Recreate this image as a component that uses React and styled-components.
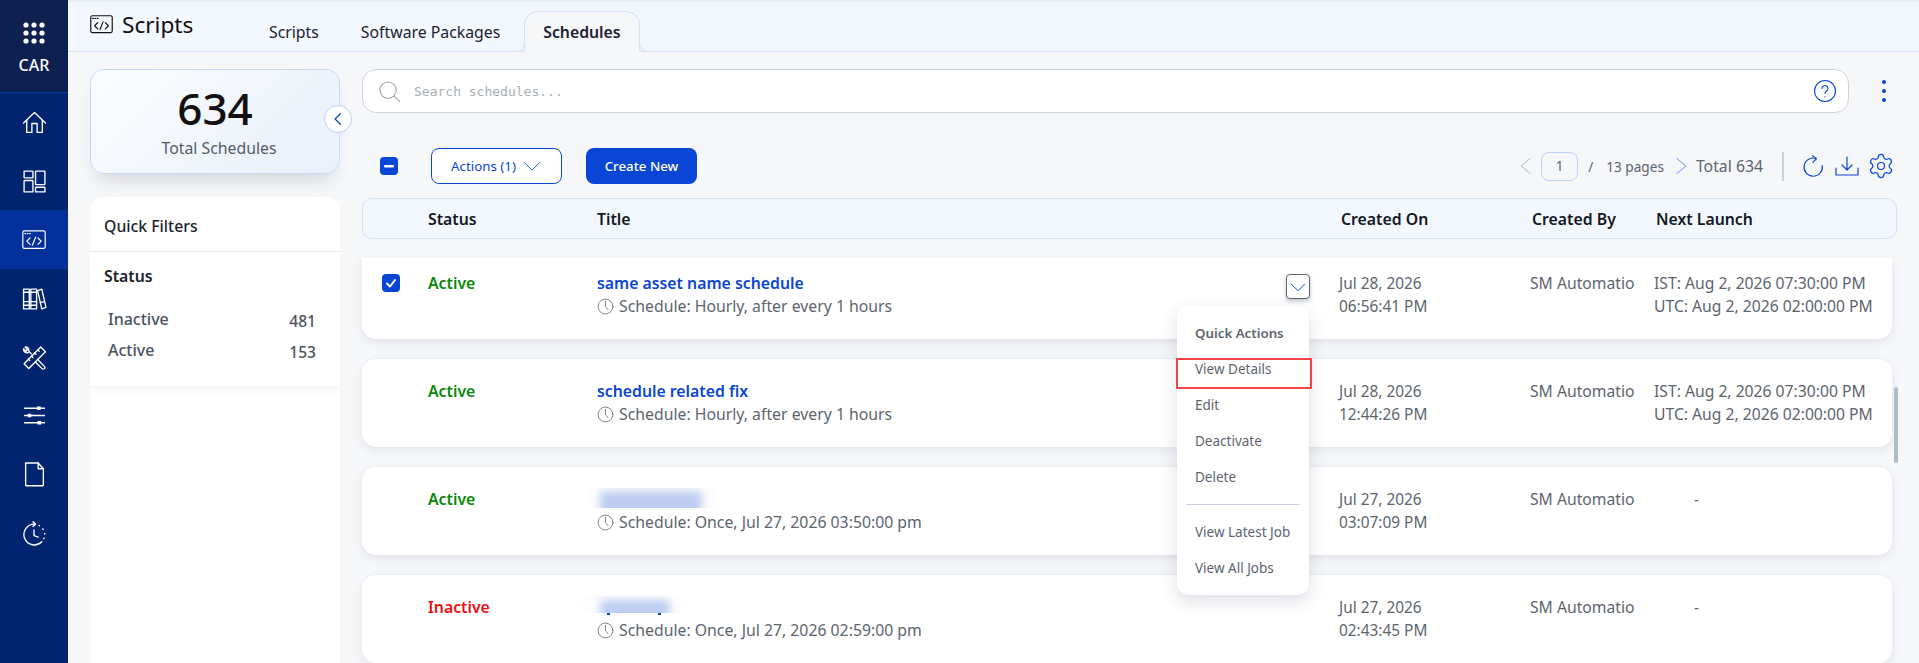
import React from "react";
import styled, { createGlobalStyle } from "styled-components";
import { Settings } from "lucide-react";

const Global = createGlobalStyle`
  html, body { margin: 0; padding: 0; height: 100%; overflow: hidden; background: #f6f7f9; }
  * { box-sizing: border-box; }
  body { font-family: "Noto Sans", "Open Sans", sans-serif; color: #111; }
`;

const Page = styled.div`display: flex; width: 1919px; height: 663px; overflow: hidden; position: relative;`;

const Sidebar = styled.nav`width: 68px; flex: none; background: #00246f; display: flex; flex-direction: column;`;
const Brand = styled.div`
  height: 93px; background: #0e2050; border-bottom: 1px solid #0a3ca8; color: #fff;
  display: flex; flex-direction: column; align-items: center; padding-top: 22px; gap: 11px;
  font-size: 16px; font-weight: 500; line-height: 20px;
`;
const NavItem = styled.div`
  height: 58.7px; display: flex; align-items: center; justify-content: center; color: #fff;
  background: ${p => (p.$active ? "#03309a" : "transparent")};
`;

const Main = styled.div`flex: 1; min-width: 0; display: flex; flex-direction: column;`;
const Header = styled.header`
  height: 52px; flex: none; background: #f3f7fe; border-bottom: 1px solid #d4e1f7;
  box-shadow: inset 0 3px 3px -2px rgba(30, 40, 60, 0.08);
  display: flex; padding-left: 22px; position: relative;
`;
const PageTitle = styled.div`
  display: flex; align-items: center; gap: 9px; height: 51px; width: 179px;
  font-size: 22.6px; line-height: 28px; color: #111; margin-top: -1px; align-self: flex-start;
`;
const Tabs = styled.div`display: flex; align-items: flex-end; height: 52px; margin-left: -21px;`;
const Tab = styled.div`
  height: 41px; padding: 0 21px; display: flex; align-items: center;
  font-size: 15.8px; color: #1b2130; font-weight: 400;
`;
const ActiveTab = styled(Tab)`
  padding: 0 18px 0 18px; position: relative; margin-left: 3px; font-weight: 600; font-size: 15.8px;
  background: #f6f7f9; border: 1px solid #d4e1f7; border-bottom: 1px solid #f6f7f9;
  border-radius: 14px 14px 0 0;
  &::before, &::after {
    content: ""; position: absolute; bottom: -1px; width: 9px; height: 9px; background: #f3f7fe;
    border-bottom: 1px solid #d4e1f7;
  }
  &::before { left: -10px; border-right: 1px solid #d4e1f7; border-radius: 0 0 9px 0; }
  &::after { right: -10px; border-left: 1px solid #d4e1f7; border-radius: 0 0 0 9px; }
`;

const Body = styled.div`flex: 1; min-height: 0; display: flex; padding: 17px 22px 0 22px; gap: 22px;`;
const LeftCol = styled.aside`width: 250px; flex: none; display: flex; flex-direction: column; gap: 23px;`;
const StatCard = styled.div`
  height: 105px; position: relative; flex: none; border: 1px solid #c8daf9; border-radius: 14px;
  background: linear-gradient(135deg, #fbfcfe 0%, #e9f0fb 100%);
  box-shadow: 0 12px 18px -8px rgba(60, 70, 100, 0.22);
  display: flex; flex-direction: column; align-items: center; padding-top: 8px;
`;
const StatNumber = styled.div`font-size: 44px; line-height: 60px; color: #111; font-weight: 500;`;
const StatLabel = styled.div`font-size: 15.8px; line-height: 20px; color: #555c68; padding-left: 8px;`;
const CollapseBtn = styled.div`
  position: absolute; right: -13px; top: 35px; width: 28px; height: 28px; border-radius: 50%;
  background: #fff; border: 1px solid #bcd2f7; display: flex; align-items: center; justify-content: center;
  color: #0a46d6;
`;
const FilterPanel = styled.div`flex: 1; background: #fff; border-radius: 14px 14px 0 0; position: relative;`;
const FilterHead = styled.div`
  height: 55px; padding: 3px 14px 0; display: flex; align-items: center; font-size: 15.8px; font-weight: 500;
  color: #1a1f2b; border-bottom: 1px solid #e8eaee;
`;
const FilterBody = styled.div`
  height: 135px; padding: 14px 14px 0; border-bottom: 1px solid #f3f4f6;
  box-shadow: 0 6px 10px -4px rgba(40, 50, 80, 0.08);
`;
const FilterTitle = styled.div`font-size: 15.8px; line-height: 20px; font-weight: 600; color: #1a1f2b; margin-bottom: 23px;`;
const FilterRow = styled.div`
  display: flex; justify-content: space-between; padding: 0 10px 0 4px; height: 31px;
  font-size: 16px; font-weight: 500; color: #4b5261; line-height: 20px;
  & > b { font-weight: 500; position: relative; top: 2px; font-size: 15.6px; }
`;

const RightCol = styled.section`flex: 1; min-width: 0; display: flex; flex-direction: column;`;
const SearchRow = styled.div`display: flex; align-items: center;`;
const SearchBar = styled.div`
  width: 1487px; height: 44px; border: 1px solid #cfd4dc; background: #fff; border-radius: 14px;
  display: flex; align-items: center; padding: 0 11px 0 15px; gap: 13px;
`;
const Placeholder = styled.div`flex: 1; font-family: "DejaVu Sans Mono", monospace; font-size: 13px; color: #a9aeb8;`;
const Tint = styled.span`display: flex; flex: none; color: ${p => p.$color};`;
const Kebab = styled.div`
  margin-left: 33px; display: flex; flex-direction: column; gap: 5px;
  & > i { width: 4px; height: 4px; border-radius: 50%; background: #0a46d6; display: block; }
`;

const Toolbar = styled.div`height: 36px; margin-top: 35px; display: flex; align-items: center; padding-left: 18px;`;
const CheckBox = styled.div`
  width: 18px; height: 18px; border-radius: 4px; background: #0a46d6; color: #fff; flex: none;
  display: flex; align-items: center; justify-content: center;
`;
const OutlineBtn = styled.div`
  width: 131px; height: 36px; margin-left: 33px; border: 1px solid #0a46d6; border-radius: 8px; background: #fff;
  color: #0a46d6; font-size: 13.3px; display: flex; align-items: center; justify-content: center; gap: 6px;
`;
const PrimaryBtn = styled.div`
  width: 111px; height: 36px; margin-left: 24px; border-radius: 8px; background: #0a46d6; color: #fff;
  font-size: 13.3px; font-weight: 500; display: flex; align-items: center; justify-content: center;
`;
const Pager = styled.div`margin-left: auto; display: flex; align-items: center; color: #5d6470; padding-right: 2px;`;
const PageInput = styled.div`
  width: 37px; height: 29px; border: 1px solid #bcd2fb; border-radius: 8px; margin: 0 10px 0 5px;
  display: flex; align-items: center; justify-content: center; font-size: 13.5px;
`;
const PageText = styled.div`font-size: 13.6px; margin-right: 7px; white-space: nowrap;`;
const Slash = styled.span`margin-right: 13px;`;
const Total = styled.div`font-size: 15.8px; margin-left: 5px; white-space: nowrap;`;
const VRule = styled.div`width: 2px; height: 29px; background: #ccd1d9; margin: 0 18px 0 19px;`;
const IconGroup = styled.div`
  display: flex; align-items: center; gap: 10px; color: #0a46d6;
  & > svg:last-child { margin-left: -2px; }
`;

const TableHead = styled.div`
  height: 42px; margin-top: 14px; display: grid; grid-template-columns: 65px 169px 744px 191px 124px 1fr; align-items: center;
  background: #f3f7fe; border: 1px solid #d4e1f7; border-radius: 10px;
  font-size: 15.8px; font-weight: 600; color: #15181f;
`;
const Rows = styled.div`margin-top: 19px; width: 1530px; display: flex; flex-direction: column; gap: 19px;`;
const Row = styled.div`
  height: ${p => (p.$clipped ? "81px" : "89px")};
  padding-top: ${p => (p.$clipped ? "14px" : "21px")};
  background: #fff; border-radius: ${p => (p.$clipped ? "0 0 14px 14px" : "14px")};
  border-top: ${p => (p.$clipped ? "0" : "1px solid #edf0f4")};
  box-shadow: 0 3px 8px rgba(50, 60, 90, 0.1);
  display: grid; grid-template-columns: 66px 169px 742px 191px 124px 1fr; font-size: 15.4px; line-height: 23px; color: #5d6470;
  flex: none; position: relative;
`;
const CheckCell = styled.div`padding-left: 20px; padding-top: 2px;`;
const StatusCell = styled.div`font-size: 15.8px; font-weight: 600; color: ${p => p.$color};`;
const TitleCell = styled.div`position: relative;`;
const TitleText = styled.div`color: #0a46d6; font-weight: 600; font-size: 15.8px; height: 23px;`;
const BlurWrap = styled.div`
  height: ${p => p.$h}px; margin-bottom: ${p => 23 - p.$h}px; position: relative; overflow: hidden;
  margin-left: ${p => -p.$pad}px; width: ${p => p.$boxW}px; background: #fdfdfe;
`;
const BlurBlob = styled.div`
  position: absolute; left: ${p => p.$pad + 3}px; width: ${p => p.$w}px; top: ${p => p.$top}px; bottom: -8px;
  background: #bccdf1; filter: blur(4px); border-radius: 4px;
`;
const Tick = styled.div`
  position: absolute; left: ${p => p.$x}px; top: 17px; width: 3px; height: 2px; background: #0a46d6;
`;
const Sched = styled.div`display: flex; align-items: center; gap: 5px; font-size: 15.8px; white-space: nowrap;`;
const ExpandBtn = styled.div`
  position: absolute; top: 2px; right: 29px; width: 24px; height: 25px; background: #fff;
  border: 1px solid #5d6470; border-radius: 4px; box-shadow: 0 2px 4px rgba(40, 50, 80, 0.3);
  display: flex; align-items: center; justify-content: center; color: #0a46d6;
`;
const Menu = styled.div`
  position: absolute; top: 34px; right: 30px; width: 132px; height: 289px; background: #fff; border-radius: 12px; z-index: 5;
  box-shadow: 0 6px 18px rgba(40, 50, 80, 0.16); padding: 9px 0 0 18px; font-size: 13.5px; color: #5d6470;
`;
const MenuHead = styled.div`font-weight: 600; height: 36px; line-height: 36px; font-size: 13.3px;`;
const MenuItem = styled.div`height: 36px; line-height: 36px; white-space: nowrap;`;
const MenuRule = styled.div`height: 1px; background: #c9d2e0; margin: 9px 9px 9px -9px;`;
const Highlight = styled.div`
  position: absolute; left: -1px; top: 52px; width: 136px; height: 31px; border: 2px solid #f44348;
`;
const NoWrap = styled.div`white-space: nowrap;`;
const LaunchText = styled(NoWrap)`font-size: 15.7px;`;
const Creator = styled(NoWrap)`font-size: 15.7px;`;
const Dash = styled.div`padding-left: 40px;`;
const Scrollbar = styled.div`
  position: absolute; right: 21px; top: 387px; width: 4px; height: 76px; background: #aebcc8; border-radius: 2px;
`;

const S = ({ size = 24, children, sw = 1.3 }) => (
  <svg width={size} height={size} viewBox="0 0 24 24" fill="none" stroke="currentColor" strokeWidth={sw} strokeLinecap="round" strokeLinejoin="round">{children}</svg>
);

const CodeIcon = ({ size = 24 }) => (
  <svg width={size} height={size * 0.8} viewBox="0 0 30 24" fill="none" stroke="currentColor" strokeWidth="1.5" strokeLinecap="round" strokeLinejoin="round">
    <rect x="1" y="1" width="28" height="22" rx="2" />
    <path d="M3.5 4.5h1M6.5 4.5h1M9.5 4.5h1" />
    <path d="M10 10l-4 4 4 4M20 10l4 4-4 4M17 9l-4 10" />
  </svg>
);
const HomeIcon = () => (
  <S size={25}><path d="M1.5 12.5 12 2.5l10.5 10" /><path d="M4.5 10v11.5h5V13h5v8.5h5V10" /></S>
);
const DashIcon = () => (
  <S size={25}><rect x="2" y="2" width="8.5" height="6.5" rx=".5" /><rect x="2" y="11" width="8.5" height="11" rx=".5" /><rect x="13" y="2" width="9" height="13" rx=".5" /><rect x="13" y="17.5" width="9" height="4.5" rx=".5" /></S>
);
const BooksIcon = () => (
  <S size={25}>
    <rect x="1.5" y="3" width="5.5" height="19" />
    <rect x="8.5" y="3" width="5.5" height="19" />
    <path d="m15 4.5 4-1.5 4 17.5-4 1.500z" />
    <path d="M1.5 6h5.5M8.5 6H14M1.5 15h5.5M8.5 15H14M1.5 18.5h5.5M8.5 18.5H14M17.5 16l3.8-1" />
  </S>
);
const ToolsIcon = () => (
  <S size={25}>
    <path d="M2 18 18 2l4.5 4.5L6.5 22.5z" />
    <path d="M15 4.5l1.5 1.5M12 7.5l1.5 1.5M9 10.5l1.5 1.5M6 13.5 7.5 15" />
    <path d="M9 8.5 6.5 6c.6-2-.8-4.500-3.500-4l2.300 2.500-1.500 1.500L1.500 3.500C1 6 3.500 8 6 7.300" />
    <path d="m15 14 6.500 6.500a1.500 1.500 0 0 1-2.200 2.200L13 16.500" />
  </S>
);
const SlidersIcon = () => (
  <svg width="25" height="25" viewBox="0 0 24 24" fill="none" stroke="currentColor" strokeWidth="1.3">
    <path d="M2 5h20M2 12h20M2 19h20" />
    <rect x="14.500" y="3.300" width="3.400" height="3.400" fill="currentColor" stroke="none" />
    <rect x="5.500" y="10.300" width="3.400" height="3.400" fill="currentColor" stroke="none" />
    <rect x="15" y="17.300" width="3.400" height="3.400" fill="currentColor" stroke="none" />
  </svg>
);
const FileIcon = () => (
  <S size={25}><path d="M3.500 1h12l5 5.500V22a.8.8 0 0 1-.8.8H4.300a.8.8 0 0 1-.8-.8z" /><path d="M15.500 1v5.500h5" /></S>
);
const HistoryIcon = () => (
  <S size={25}>
    <path d="M12 3a10 10 0 1 0 7 17" />
    <path d="M10.500.8 13 3l-2.500 2.200" />
    <path d="M11.500 8.500V14l4 1.500" />
    <path d="M16.500 4.200l.4.3M20 7.500l.3.5M21.800 12v.5M21.200 16.500l-.3.5" />
  </S>
);
const CHEVRONS = { down: "M3 8l9 9 9-9", left: "M17 3 6.200 12 17 21", right: "M7 3l10.800 9L7 21", leftBold: "M16 3l-9 9 9 9" };
const Chevron = ({ dir = "down", size = 16, sw = 1.5 }) => <S size={size} sw={sw}><path d={CHEVRONS[dir]} /></S>;
const ClockIcon = () => (
  <S size={17} sw={1.1}><circle cx="12" cy="12" r="10.500" /><path d="M12 4.500V12l3.500 4.500" /></S>
);

const rows = [
  { status: "Active", color: "#0a8a0a", title: "same asset name schedule", sched: "Schedule: Hourly, after every 1 hours", d1: "Jul 28, 2026", d2: "06:56:41 PM", next: true, checked: true, clipped: true },
  { status: "Active", color: "#0a8a0a", title: "schedule related fix", sched: "Schedule: Hourly, after every 1 hours", d1: "Jul 28, 2026", d2: "12:44:26 PM", next: true },
  { status: "Active", color: "#0a8a0a", blur: { h: 20, pad: 7, w: 102, top: 3, box: 126 }, sched: "Schedule: Once, Jul 27, 2026 03:50:00 pm", d1: "Jul 27, 2026", d2: "03:07:09 PM" },
  { status: "Inactive", color: "#f00f0f", blur: { h: 17, pad: 15, w: 70, top: 4, box: 100 }, ticks: [10, 61], sched: "Schedule: Once, Jul 27, 2026 02:59:00 pm", d1: "Jul 27, 2026", d2: "02:43:45 PM" },
];

export default function App() {
  return (
    <Page>
      <Global />
      <Sidebar>
        <Brand>
          <svg width="22" height="22" viewBox="0 0 22 22" fill="#fff">
            {[3, 11, 19].flatMap(y => [3, 11, 19].map(x => <circle key={`${x}-${y}`} cx={x} cy={y} r="2.6" />))}
          </svg>
          CAR
        </Brand>
        <NavItem><HomeIcon /></NavItem>
        <NavItem><DashIcon /></NavItem>
        <NavItem $active><CodeIcon /></NavItem>
        <NavItem><BooksIcon /></NavItem>
        <NavItem><ToolsIcon /></NavItem>
        <NavItem><SlidersIcon /></NavItem>
        <NavItem><FileIcon /></NavItem>
        <NavItem><HistoryIcon /></NavItem>
      </Sidebar>
      <Main>
        <Header>
          <PageTitle><CodeIcon size={23} /><span>Scripts</span></PageTitle>
          <Tabs>
            <Tab>Scripts</Tab>
            <Tab>Software Packages</Tab>
            <ActiveTab>Schedules</ActiveTab>
          </Tabs>
        </Header>
        <Body>
          <LeftCol>
            <StatCard>
              <StatNumber>634</StatNumber>
              <StatLabel>Total Schedules</StatLabel>
              <CollapseBtn><Chevron dir="leftBold" size={14} sw={2.2} /></CollapseBtn>
            </StatCard>
            <FilterPanel>
              <FilterHead>Quick Filters</FilterHead>
              <FilterBody>
                <FilterTitle>Status</FilterTitle>
                <FilterRow><span>Inactive</span><b>481</b></FilterRow>
                <FilterRow><span>Active</span><b>153</b></FilterRow>
              </FilterBody>
            </FilterPanel>
          </LeftCol>
          <RightCol>
            <SearchRow>
              <SearchBar>
                <Tint $color="#9aa3b0"><S size={23} sw={1.1}><circle cx="10.5" cy="10.5" r="8.5" /><path d="m17 17 5.5 5.5" /></S></Tint>
                <Placeholder>Search schedules...</Placeholder>
                <Tint $color="#0a46d6"><S size={24} sw={1.1}><circle cx="12" cy="12" r="10.5" /><path d="M9 9.5a3 3 0 1 1 4.5 2.6c-1 .6-1.5 1.1-1.5 2.4" /><path d="M12 17.6v.2" /></S></Tint>
              </SearchBar>
              <Kebab><i /><i /><i /></Kebab>
            </SearchRow>
            <Toolbar>
              <CheckBox><svg width="10" height="3" viewBox="0 0 10 3"><rect width="10" height="2.4" rx="1" fill="#fff" /></svg></CheckBox>
              <OutlineBtn>Actions (1) <Chevron size={20} sw={1.1} /></OutlineBtn>
              <PrimaryBtn>Create New</PrimaryBtn>
              <Pager>
                <Tint $color="#a9afb9"><Chevron dir="left" size={20} sw={1.1} /></Tint>
                <PageInput>1</PageInput>
                <PageText><Slash>/</Slash>13 pages</PageText>
                <Tint $color="#5c86ef"><Chevron dir="right" size={20} sw={1.1} /></Tint>
                <Total>Total 634</Total>
                <VRule />
                <IconGroup>
                  <S size={23} sw={1.2}><path d="M15 3.800A9.500 9.500 0 1 0 21 11" /><path d="M11 .8l4 3-3.500 4" /></S>
                  <S size={24} sw={1.2}><path d="M12 3v13M7 11l5 5 5-5" /><path d="M1 14v7h22v-7" /></S>
                  <Settings size={28} strokeWidth={1.05} />
                </IconGroup>
              </Pager>
            </Toolbar>
            <TableHead>
              <span />
              <span>Status</span>
              <span>Title</span>
              <span>Created On</span>
              <NoWrap>Created By</NoWrap>
              <NoWrap>Next Launch</NoWrap>
            </TableHead>
            <Rows>
              {rows.map((r, i) => (
                <Row key={i} $clipped={r.clipped}>
                  <CheckCell>
                    {r.checked && (
                      <CheckBox>
                        <svg width="12" height="12" viewBox="0 0 12 12" fill="none" stroke="#fff" strokeWidth="2" strokeLinecap="round" strokeLinejoin="round"><path d="M2 6.5 5 9.5 10 3" /></svg>
                      </CheckBox>
                    )}
                  </CheckCell>
                  <StatusCell $color={r.color}>{r.status}</StatusCell>
                  <TitleCell>
                    {r.blur ? (
                      <BlurWrap $h={r.blur.h} $pad={r.blur.pad} $boxW={r.blur.box}>
                        <BlurBlob $pad={r.blur.pad} $w={r.blur.w} $top={r.blur.top} />
                      </BlurWrap>
                    ) : <TitleText>{r.title}</TitleText>}
                    {r.ticks && r.ticks.map(x => <Tick key={x} $x={x} />)}
                    <Sched><ClockIcon />{r.sched}</Sched>
                    {r.checked && (
                      <>
                        <ExpandBtn><Chevron size={18} sw={1.3} /></ExpandBtn>
                        <Menu>
                          <MenuHead>Quick Actions</MenuHead>
                          <MenuItem>View Details</MenuItem>
                          <MenuItem>Edit</MenuItem>
                          <MenuItem>Deactivate</MenuItem>
                          <MenuItem>Delete</MenuItem>
                          <MenuRule />
                          <MenuItem>View Latest Job</MenuItem>
                          <MenuItem>View All Jobs</MenuItem>
                          <Highlight />
                        </Menu>
                      </>
                    )}
                  </TitleCell>
                  <div>{r.d1}<br />{r.d2}</div>
                  <Creator>SM Automatio</Creator>
                  {r.next ? (
                    <LaunchText>IST: Aug 2, 2026 07:30:00 PM<br />UTC: Aug 2, 2026 02:00:00 PM</LaunchText>
                  ) : <Dash>-</Dash>}
                  <span />
                </Row>
              ))}
            </Rows>
          </RightCol>
        </Body>
      </Main>
      <Scrollbar />
    </Page>
  );
}
